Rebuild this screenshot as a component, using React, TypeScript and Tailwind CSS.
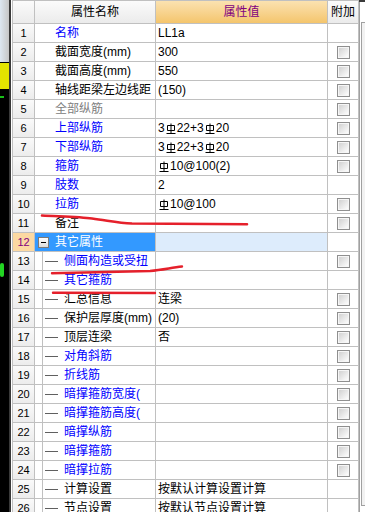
import type { ReactNode } from 'react';

// rebar grade symbol (HRB400) drawn as a tiny glyph
const Rb = () => (
  <svg width="10" height="11" viewBox="0 0 10 11" className="mx-[1px] inline-block align-[-1px]">
    <path d="M5 0.5V10M1.5 2.5H8.5V7.5H1.5ZM0.5 10.5H9.5" stroke="#000" strokeWidth="1" fill="none" />
  </svg>
);

interface Row {
  n: number;
  name: string;
  color: 'blue' | 'black' | 'grey';
  value?: ReactNode;
  check: boolean;
  tree?: boolean;
}

const rows: Row[] = [
  { n: 1, name: '名称', color: 'blue', value: 'LL1a', check: false },
  { n: 2, name: '截面宽度(mm)', color: 'black', value: '300', check: true },
  { n: 3, name: '截面高度(mm)', color: 'black', value: '550', check: true },
  { n: 4, name: '轴线距梁左边线距', color: 'black', value: '(150)', check: true },
  { n: 5, name: '全部纵筋', color: 'grey', check: true },
  { n: 6, name: '上部纵筋', color: 'blue', value: <>3<Rb />22+3<Rb />20</>, check: true },
  { n: 7, name: '下部纵筋', color: 'blue', value: <>3<Rb />22+3<Rb />20</>, check: true },
  { n: 8, name: '箍筋', color: 'blue', value: <><Rb />10@100(2)</>, check: true },
  { n: 9, name: '肢数', color: 'blue', value: '2', check: false },
  { n: 10, name: '拉筋', color: 'blue', value: <><Rb />10@100</>, check: true },
  { n: 11, name: '备注', color: 'black', check: true },
  { n: 13, name: '侧面构造或受扭', color: 'blue', check: true, tree: true },
  { n: 14, name: '其它箍筋', color: 'blue', check: false, tree: true },
  { n: 15, name: '汇总信息', color: 'black', value: '连梁', check: true, tree: true },
  { n: 16, name: '保护层厚度(mm)', color: 'black', value: '(20)', check: true, tree: true },
  { n: 17, name: '顶层连梁', color: 'black', value: '否', check: true, tree: true },
  { n: 18, name: '对角斜筋', color: 'blue', check: true, tree: true },
  { n: 19, name: '折线筋', color: 'blue', check: true, tree: true },
  { n: 20, name: '暗撑箍筋宽度(', color: 'blue', check: true, tree: true },
  { n: 21, name: '暗撑箍筋高度(', color: 'blue', check: true, tree: true },
  { n: 22, name: '暗撑纵筋', color: 'blue', check: true, tree: true },
  { n: 23, name: '暗撑箍筋', color: 'blue', check: true, tree: true },
  { n: 24, name: '暗撑拉筋', color: 'blue', check: true, tree: true },
  { n: 25, name: '计算设置', color: 'black', value: '按默认计算设置计算', check: false, tree: true },
  { n: 26, name: '节点设置', color: 'black', value: '按默认节点设置计算', check: false, tree: true },
];

const colorClass = {
  blue: 'text-[#0000ff]',
  black: 'text-black',
  grey: 'text-[#808080]',
};

const CheckBox = () => (
  <div className="h-[13px] w-[13px] border border-[#8f8f8f] bg-[#f6f6f6] p-px">
    <div className="h-full w-full bg-gradient-to-br from-[#d2d2d2] to-[#fdfdfd]" />
  </div>
);

const NumCell = ({ n, active }: { n: number; active?: boolean }) => (
  <div
    className={
      active
        ? 'flex h-[18px] items-center justify-center bg-[#fcd9a2] text-[11px] text-[#800080]'
        : 'flex h-[18px] items-center justify-center bg-gradient-to-b from-[#fafafa] to-[#ececec] text-[11px] text-black'
    }
  >
    {n}
  </div>
);

const DataRow = ({ r }: { r: Row }) => (
  <>
    <NumCell n={r.n} />
    {r.tree ? (
      <div className="flex h-[18px] items-center bg-white">
        <div className="h-full w-[8px] border-r border-[#c0c0c0]" />
        <div className="ml-[2px] h-px w-[13px] bg-[#606060]" />
        <span className={`ml-[6px] whitespace-nowrap ${colorClass[r.color]}`}>{r.name}</span>
      </div>
    ) : (
      <div className="flex h-[18px] items-center bg-white pl-[20px]">
        <span className={`whitespace-nowrap ${colorClass[r.color]}`}>{r.name}</span>
      </div>
    )}
    <div className="flex h-[18px] items-center overflow-hidden whitespace-nowrap bg-white pl-[2px] text-black">
      {r.value}
    </div>
    <div className="flex h-[18px] items-center justify-center bg-white">{r.check && <CheckBox />}</div>
  </>
);

export default function App() {
  const before = rows.filter((r) => r.n < 12);
  const after = rows.filter((r) => r.n > 12);
  return (
    <div className="relative flex h-[512px] w-[365px] overflow-hidden bg-white font-['Liberation_Sans','Noto_Sans_CJK_SC',sans-serif] text-[12px] leading-none">
      {/* left dark strip */}
      <div className="flex w-[9px] flex-col bg-black">
        <div className="h-[62px] bg-gradient-to-r from-[#dde7f1] to-[#c6c6c6]" />
        <div className="h-px" />
        <div className="h-[26px] bg-[#e4e400]" />
        <div className="h-[7px]" />
        <div className="h-[2px] w-[4px] bg-[#18c018]" />
        <div className="h-[165px]" />
        <div className="h-[14px] w-[4px] rounded-full bg-[#22d422]" />
      </div>
      <div className="w-[2px] bg-[#3a3a3a]" />
      <div className="w-px bg-white" />

      {/* property grid */}
      <div className="flex flex-col">
        <div className="h-[2px] bg-[#3a3a3a]" />
        <div className="h-px bg-[#e6e6e6]" />
        <div className="grid grid-cols-[21px_120px_171px_30px] gap-px bg-[#c0c0c0] p-px">
          <div className="h-[22px] bg-gradient-to-b from-[#fbfbfb] to-[#ebebeb]" />
          <div className="flex h-[22px] items-center justify-center bg-gradient-to-b from-[#fbfbfb] to-[#ebebeb] text-black">
            属性名称
          </div>
          <div className="flex h-[22px] items-center justify-center bg-gradient-to-b from-[#fbe2b0] to-[#f4c56c] text-[#800080]">
            属性值
          </div>
          <div className="flex h-[22px] items-center justify-center bg-gradient-to-b from-[#fbfbfb] to-[#ebebeb] text-black">
            附加
          </div>

          {before.map((r) => (
            <DataRow key={r.n} r={r} />
          ))}

          <NumCell n={12} active />
          <div className="flex h-[18px] items-center bg-[#3399ff]">
            <div className="ml-[3px] flex h-[11px] w-[11px] items-center justify-center border border-[#7a7a7a] bg-gradient-to-b from-white to-[#dcdcdc]">
              <div className="h-px w-[5px] bg-black" />
            </div>
            <span className="ml-[6px] whitespace-nowrap text-white">其它属性</span>
          </div>
          <div className="h-[18px] bg-[#ddecfc]" />
          <div className="h-[18px] bg-white" />

          {after.map((r) => (
            <DataRow key={r.n} r={r} />
          ))}
        </div>
      </div>

      {/* right edge / scrollbar frame */}
      <div className="flex w-[6px] flex-col">
        <div className="h-[2px] bg-[#3a3a3a]" />
        <div className="flex flex-1">
          <div className="w-px bg-[#a0a0a0]" />
          <div className="w-px bg-white" />
          <div className="flex flex-1 flex-col pt-[20px] pb-[6px]">
            <div className="flex-1 border-t border-b border-l border-[#a0a0a0] bg-[#f2f2f2]" />
          </div>
        </div>
      </div>

      {/* red hand-drawn annotations */}
      <svg className="pointer-events-none absolute inset-0" width="365" height="512">
        <path
          d="M42 215.5 C60 216.5 80 217 92 218.5 C108 220.5 118 223 132 223.5 L247 224.3"
          stroke="#e5202b"
          strokeWidth="2.6"
          fill="none"
          strokeLinecap="round"
        />
        <path
          d="M52 273.3 L150 271 C162 270 170 268 182 266.5"
          stroke="#e5202b"
          strokeWidth="2.4"
          fill="none"
          strokeLinecap="round"
        />
        <path d="M53 292.8 L155 293" stroke="#e5202b" strokeWidth="2.4" fill="none" strokeLinecap="round" />
      </svg>
    </div>
  );
}
